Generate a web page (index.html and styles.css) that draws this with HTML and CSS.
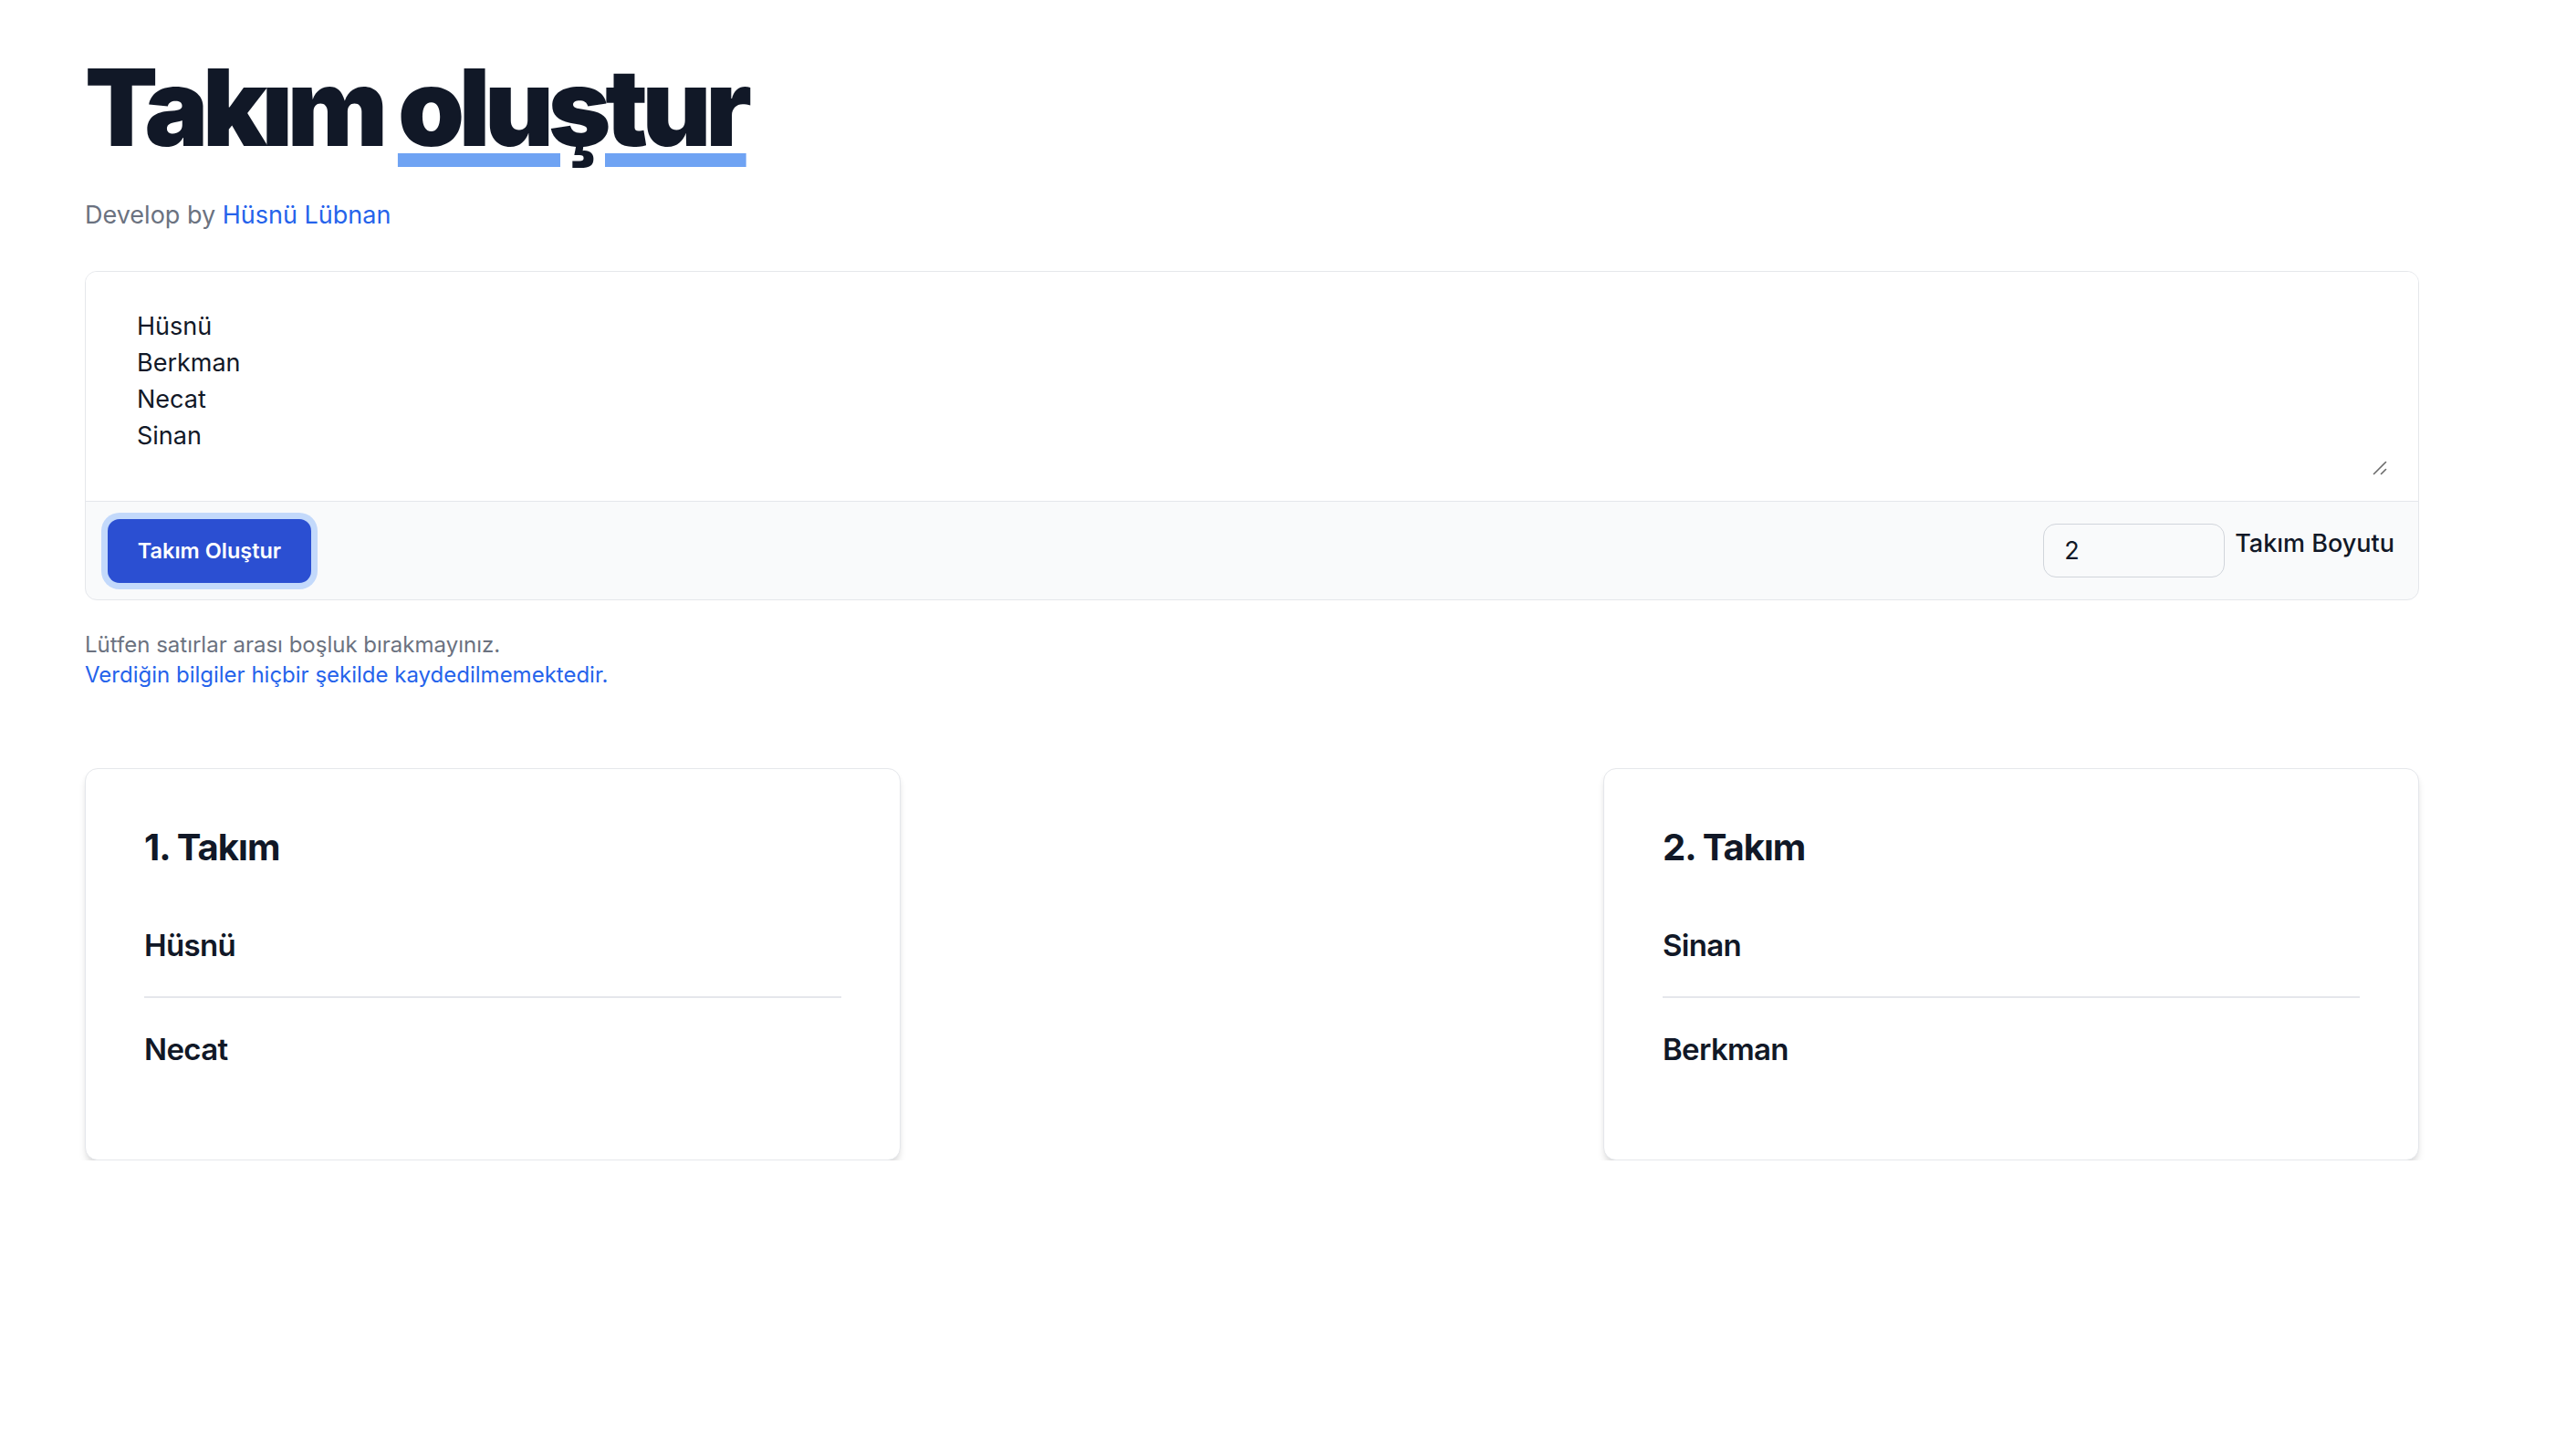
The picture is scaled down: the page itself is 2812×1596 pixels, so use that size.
FILE: index.html
```html
<!DOCTYPE html>
<html lang="tr">
<head>
<meta charset="utf-8">
<title>Takım oluştur</title>
<link rel="stylesheet" href="styles.css">
</head>
<body>
<main class="page">
  <h1 class="title">Takım <span class="mark">oluştur</span></h1>
  <p class="byline">Develop by <a class="link" href="#">Hüsnü Lübnan</a></p>

  <form class="composer">
    <div class="composer-body">
      <textarea class="names">Hüsnü
Berkman
Necat
Sinan</textarea>
      <svg class="grip" width="16" height="16" viewBox="0 0 16 16" aria-hidden="true">
        <path d="M1.5 14.5 L14.5 1.5 M9.5 14.5 L14.5 9.5" stroke="#6b6b6b" stroke-width="1.6" stroke-linecap="round" fill="none"/>
      </svg>
    </div>
    <div class="composer-footer">
      <button type="button" class="btn">Takım Oluştur</button>
      <div class="size">
        <input class="size-input" type="text" value="2">
        <label class="size-label">Takım Boyutu</label>
      </div>
    </div>
  </form>

  <div class="notes">
    <p class="note">Lütfen satırlar arası boşluk bırakmayınız.</p>
    <p class="note note-blue">Verdiğin bilgiler hiçbir şekilde kaydedilmemektedir.</p>
  </div>

  <section class="teams">
    <div class="team">
      <h2 class="team-title">1. Takım</h2>
      <ul class="members">
        <li class="member">Hüsnü</li>
        <li class="member">Necat</li>
      </ul>
    </div>
    <div class="team">
      <h2 class="team-title">2. Takım</h2>
      <ul class="members">
        <li class="member">Sinan</li>
        <li class="member">Berkman</li>
      </ul>
    </div>
  </section>
</main>
</body>
</html>
```

FILE: styles.css
```css
* { box-sizing: border-box; }

html, body {
  margin: 0;
  background: #ffffff;
}

body {
  font-family: Inter, "Noto Sans", "Liberation Sans", sans-serif;
  color: #111827;
}

.page {
  width: 2651px;
  padding: 59px 0 0 93px;
}

.title {
  margin: 0;
  font-size: 117px;
  line-height: 1;
  font-weight: 900;
  letter-spacing: -0.054em;
  color: #111827;
}

.mark {
  text-decoration: underline;
  text-decoration-color: #6fa3f3;
  text-decoration-thickness: 15px;
  text-underline-offset: 8px;
}

.byline {
  margin: 40px 0 0;
  font-size: 27px;
  line-height: 40px;
  color: #6b7280;
}

.link {
  color: #2563eb;
  text-decoration: none;
}

.composer {
  margin-top: 41px;
  border: 1px solid #e5e7eb;
  border-radius: 13px;
  background: #f9fafb;
  overflow: hidden;
}

.composer-body {
  position: relative;
  background: #ffffff;
  padding: 27px 31px 27px 32px;
  border-bottom: 1px solid #e5e7eb;
}

.names {
  display: block;
  width: 100%;
  height: 197px;
  border: none;
  outline: none;
  padding: 13px 24px 9px;
  font-family: Inter, "Noto Sans", "Liberation Sans", sans-serif;
  font-size: 27px;
  line-height: 40px;
  color: #111827;
  resize: none;
  background: #ffffff;
}

.grip {
  position: absolute;
  right: 34px;
  bottom: 28px;
}

.composer-footer {
  display: flex;
  align-items: center;
  justify-content: space-between;
  height: 107px;
  padding: 0 26px 0 24px;
}

.btn {
  width: 223px;
  height: 70px;
  border: none;
  border-radius: 13px;
  background: #2b4fd2;
  color: #ffffff;
  font-family: Inter, "Noto Sans", "Liberation Sans", sans-serif;
  font-size: 23.5px;
  font-weight: 600;
  box-shadow: 0 0 0 7px #c3d9fb;
  padding: 0;
}

.size {
  display: flex;
  align-items: flex-start;
  gap: 11px;
}

.size-input {
  width: 199px;
  height: 59px;
  border: 1px solid #d1d5db;
  border-radius: 14px;
  background: #f9fafb;
  padding: 0 22px;
  font-family: Inter, "Noto Sans", "Liberation Sans", sans-serif;
  font-size: 27px;
  color: #111827;
}

.size-label {
  padding-top: 2px;
  font-size: 27px;
  line-height: 40px;
  font-weight: 500;
  color: #111827;
}

.notes {
  margin-top: 32px;
}

.note {
  margin: 0;
  font-size: 24px;
  line-height: 33px;
  color: #6b7280;
}

.note-blue {
  color: #2563eb;
}

.teams {
  display: flex;
  justify-content: space-between;
  margin-top: 86px;
}

.team {
  width: 894px;
  border: 1px solid #e5e7eb;
  border-radius: 14px;
  background: #ffffff;
  padding: 64px 64px 65px;
  box-shadow: 0 7px 10px -2px rgba(0, 0, 0, 0.12), 0 3px 7px -3px rgba(0, 0, 0, 0.1);
}

.team-title {
  margin: 0 0 29px;
  font-size: 40px;
  line-height: 44px;
  font-weight: 700;
  letter-spacing: -0.025em;
  color: #111827;
}

.members {
  list-style: none;
  margin: 0;
  padding: 0;
}

.member {
  padding: 36px 0;
  font-size: 33px;
  line-height: 40px;
  font-weight: 600;
  letter-spacing: -0.02em;
  color: #111827;
}

.member + .member {
  border-top: 2px solid #e5e7eb;
}
```
